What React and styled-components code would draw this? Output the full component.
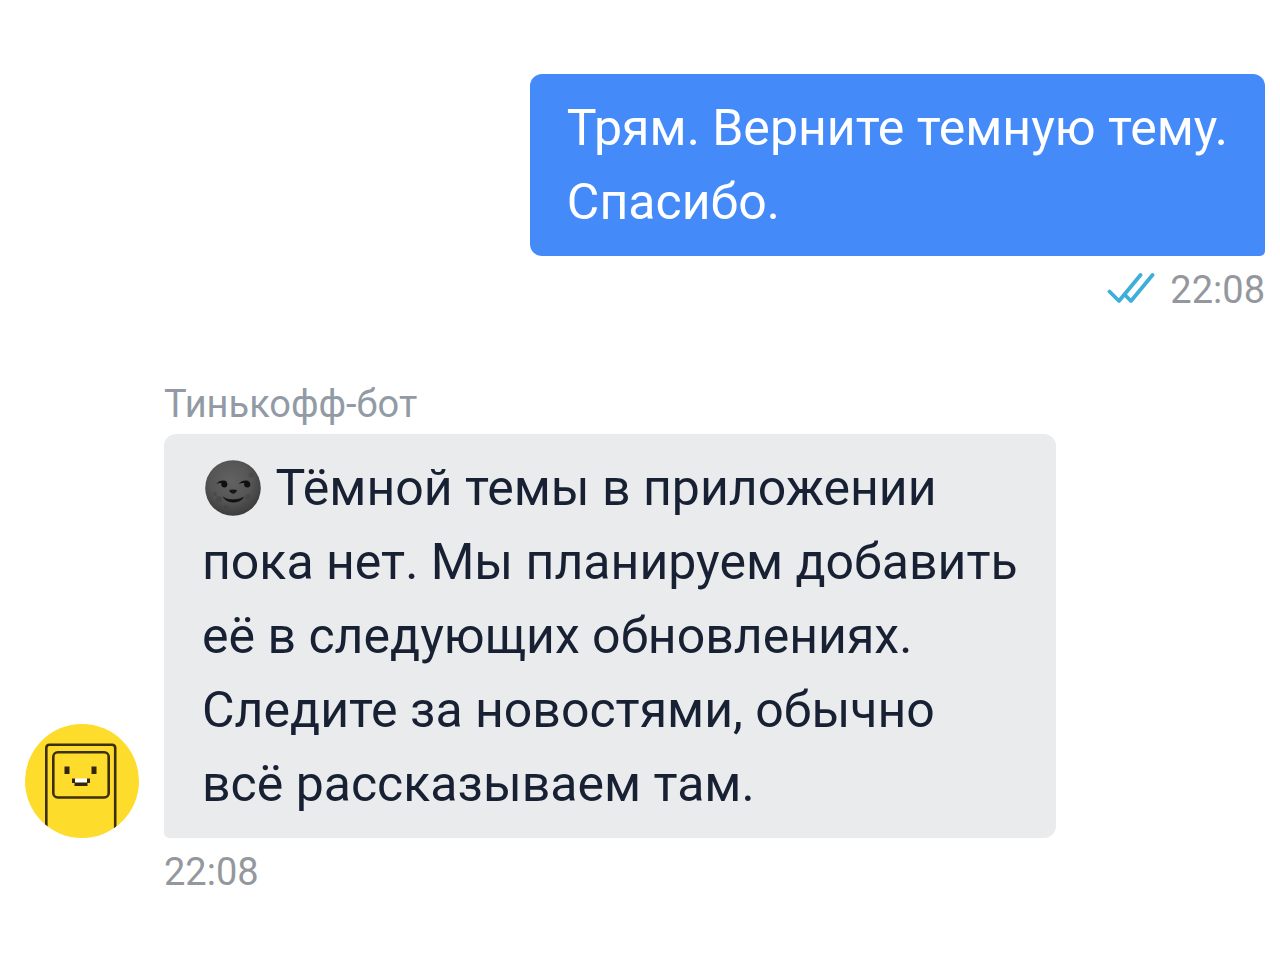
import React from 'react'
import styled, { createGlobalStyle } from 'styled-components';

const GlobalStyle = createGlobalStyle`
  body {
    margin: 0;
    background: #ffffff;
    font-family: Roboto, "Liberation Sans", sans-serif;
  }
`;

const Chat = styled.main`
  display: flex;
  flex-direction: column;
  gap: 70px;
  padding: 74px 15px 74px 25px;
`;

const Outgoing = styled.article`
  display: flex;
  flex-direction: column;
  align-items: flex-end;
  gap: 12px;
`;

const Incoming = styled.article`
  display: grid;
  grid-template-columns: 114px 1fr;
  column-gap: 25px;
`;

const Bubble = styled.p`
  box-sizing: border-box;
  width: fit-content;
  margin: 0;
  padding: ${props => props.$own ? "17px 37px" : "17px 38px"};
  border-radius: ${props => props.$own ? "12px 12px 5px 12px" : "12px 12px 12px 5px"};
  background: ${props => props.$own ? "#448bf9" : "#eaebec"};
  color: ${props => props.$own ? "#ffffff" : "#172133"};
  font-size: 50px;
  line-height: 74px;
`;

const Author = styled.span`
  grid-column: 2;
  margin-bottom: 8px;
  color: #929ba5;
  font-size: 38px;
  line-height: 44px;
`;

const Status = styled.div`
  display: flex;
  align-items: center;
  gap: 15px;
`;

const Time = styled.time`
  color: #94989e;
  font-size: 38px;
  line-height: 44px;
`;

const IncomingTime = styled(Time)`
  grid-column: 2;
  margin-top: 12px;
`;

const Avatar = styled.svg`
  align-self: end;
  width: 114px;
  height: 114px;
`;

const Emoji = styled.svg`
  width: 62px;
  height: 60px;
  vertical-align: -13px;
`;

const Checks = styled.svg`
  width: 48px;
  height: 36px;
`;

function ReadIcon() {
  return (
    <Checks viewBox="0 0 48 36" role="img" aria-label="Прочитано">
      <g fill="none" stroke="#3eaedb" strokeWidth="3.8" strokeLinecap="round" strokeLinejoin="round">
        <path d="M2.5 19.5 L12 29 L33.5 3" />
        <path d="M18.5 23.5 L24 29 L45.5 3" />
      </g>
    </Checks>
  );
}

function BotAvatar() {
  return (
    <Avatar viewBox="0 0 114 114" role="img" aria-label="Тинькофф-бот">
      <defs>
        <clipPath id="avatar-circle">
          <circle cx="57" cy="57" r="57" />
        </clipPath>
      </defs>
      <circle cx="57" cy="57" r="57" fill="#fddc2c" />
      <g clipPath="url(#avatar-circle)" fill="none" stroke="#3d2e0c" strokeWidth="2.6">
        <path d="M21.3 114 V24 Q21.3 20.8 24.5 20.8 H87 Q90.2 20.8 90.2 24 V114" />
        <rect x="28.3" y="28.3" width="55.4" height="45.2" rx="4.5" />
      </g>
      <path d="M39.5 42.5h5v7.5h-5z M66.5 42.5h5v7.5h-5z" fill="#33260c" />
      <path d="M47 54.5h3v2h12v-2h3v4.5h-2.5v3H49.5v-3H47z" fill="#33260c" />
      <path d="M50 54.5h12v4H50z" fill="#ffffff" />
    </Avatar>
  );
}

function MoonEmoji() {
  return (
    <Emoji viewBox="0 0 62 60" role="img" aria-label="Луна с лицом">
      <defs>
        <radialGradient id="moon" cx="46%" cy="38%" r="62%">
          <stop offset="0" stopColor="#626262" />
          <stop offset="0.6" stopColor="#555555" />
          <stop offset="1" stopColor="#3c3c3c" />
        </radialGradient>
      </defs>
      <circle cx="31" cy="30" r="27.8" fill="url(#moon)" />
      <g fill="#454545" opacity="0.6">
        <circle cx="17" cy="41" r="3" />
        <circle cx="13" cy="36" r="2" />
        <circle cx="46" cy="39" r="3" />
        <circle cx="49" cy="17" r="2.5" />
        <circle cx="24" cy="49" r="2" />
      </g>
      <path d="M14.3 26 Q18 21.5 23.5 22.8 Q26.3 25 25 28.2 Q23 30.5 20 28.8 Q18.6 27 19.5 25 Q17 24.6 14.3 26z" fill="#101010" />
      <path d="M36.6 26 Q40.5 21.5 46 22.8 Q49.3 25 48 28.2 Q46 30.5 43 28.8 Q41.4 27 42.3 25 Q39.6 24.6 36.6 26z" fill="#101010" />
      <path d="M27.3 32 Q31.2 30.8 35 32 Q34.5 35.3 31.2 35.7 Q27.8 35.3 27.3 32z" fill="#161616" />
      <path d="M21.3 39 Q24 41.6 31 41.8 Q38 41.6 41.6 39.2 Q39 43.8 31.5 44.2 Q24 44 21.3 39z" fill="#101010" stroke="#101010" strokeWidth="0.6" />
    </Emoji>
  );
}

function App() {
  return (
    <>
      <GlobalStyle />
      <Chat>
        <Outgoing>
          <Bubble $own>
            Трям. Верните темную тему.
            <br />
            Спасибо.
          </Bubble>
          <Status>
            <ReadIcon />
            <Time dateTime="22:08">22:08</Time>
          </Status>
        </Outgoing>

        <Incoming>
          <Author>Тинькофф-бот</Author>
          <BotAvatar />
          <Bubble>
            <MoonEmoji /> Тёмной темы в приложении
            <br />
            пока нет. Мы планируем добавить
            <br />
            её в следующих обновлениях.
            <br />
            Следите за новостями, обычно
            <br />
            всё рассказываем там.
          </Bubble>
          <IncomingTime dateTime="22:08">22:08</IncomingTime>
        </Incoming>
      </Chat>
    </>
  );
}

export default App
